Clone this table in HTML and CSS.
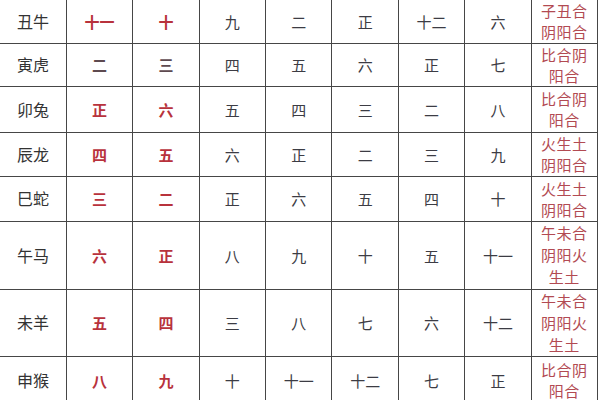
FILE: index.html
```html
<!DOCTYPE html>
<html lang="zh">
<head>
<meta charset="utf-8">
<link rel="stylesheet" href="styles.css">
</head>
<body>
<table class="grid">
  <colgroup>
    <col class="c"><col class="c"><col class="c"><col class="c"><col class="c"><col class="c"><col class="c"><col class="c"><col class="c">
  </colgroup>
  <tr class="r1">
    <td class="name">丑牛</td><td class="red">十一</td><td class="red">十</td><td>九</td><td>二</td><td>正</td><td>十二</td><td>六</td><td class="note">子丑合<br>阴阳合</td>
  </tr>
  <tr class="r2">
    <td class="name">寅虎</td><td class="gray">二</td><td class="gray">三</td><td>四</td><td>五</td><td>六</td><td>正</td><td>七</td><td class="note">比合阴<br>阳合</td>
  </tr>
  <tr class="r3">
    <td class="name">卯兔</td><td class="red">正</td><td class="red">六</td><td>五</td><td>四</td><td>三</td><td>二</td><td>八</td><td class="note">比合阴<br>阳合</td>
  </tr>
  <tr class="r4">
    <td class="name">辰龙</td><td class="red">四</td><td class="red">五</td><td>六</td><td>正</td><td>二</td><td>三</td><td>九</td><td class="note">火生土<br>阴阳合</td>
  </tr>
  <tr class="r5">
    <td class="name">巳蛇</td><td class="red">三</td><td class="red">二</td><td>正</td><td>六</td><td>五</td><td>四</td><td>十</td><td class="note">火生土<br>阴阳合</td>
  </tr>
  <tr class="r6">
    <td class="name">午马</td><td class="red">六</td><td class="red">正</td><td>八</td><td>九</td><td>十</td><td>五</td><td>十一</td><td class="note">午未合<br>阴阳火<br>生土</td>
  </tr>
  <tr class="r7">
    <td class="name">未羊</td><td class="red">五</td><td class="red">四</td><td>三</td><td>八</td><td>七</td><td>六</td><td>十二</td><td class="note">午未合<br>阴阳火<br>生土</td>
  </tr>
  <tr class="r8">
    <td class="name">申猴</td><td class="red">八</td><td class="red">九</td><td>十</td><td>十一</td><td>十二</td><td>七</td><td>正</td><td class="note">比合阴<br>阳合</td>
  </tr>
</table>
</body>
</html>
```
FILE: styles.css
```css
html, body {
  margin: 0;
  padding: 0;
  background: #ffffff;
}
body {
  font-family: "Noto Sans CJK SC", "Noto Sans", sans-serif;
  overflow: hidden;
}
.grid {
  border-collapse: collapse;
  table-layout: fixed;
  width: 598px;
}
.grid .c {
  width: 66.4px;
}
.grid td {
  border: 1.5px solid #464646;
  text-align: center;
  vertical-align: middle;
  padding: 0;
  font-size: 15px;
  line-height: 21px;
  color: #3c3c44;
}
.grid tr:first-child td {
  border-top: none;
}
.grid td:first-child {
  border-left: none;
}
.grid td.name {
  font-size: 16px;
  color: #333333;
}
.grid td.red {
  color: #b8323c;
  font-weight: 700;
}
.grid td.gray {
  color: #5e4a50;
  font-weight: 700;
}
.grid td.note {
  color: #b24a52;
  font-size: 15px;
  line-height: 21px;
  letter-spacing: 0.5px;
}
.grid .r6 td.note,
.grid .r7 td.note {
  line-height: 22px;
}
.r1 { height: 43px; }
.r2 { height: 43px; }
.r3 { height: 46px; }
.r4 { height: 44px; }
.r5 { height: 45px; }
.r6 { height: 68px; }
.r7 { height: 66px; }
.r8 { height: 48px; }
```
